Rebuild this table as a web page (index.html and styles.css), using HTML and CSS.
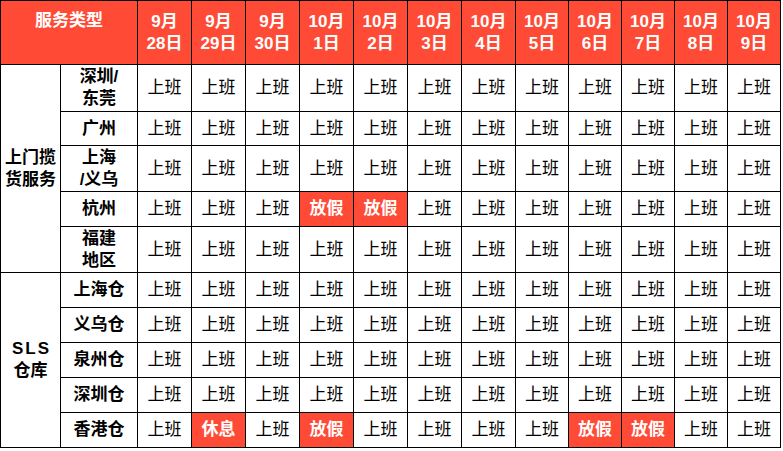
FILE: index.html
```html
<!DOCTYPE html>
<html lang="zh-CN">
<head>
<meta charset="utf-8">
<link rel="stylesheet" href="styles.css">
</head>
<body>
<table class="sched">
<colgroup>
<col class="c-grp"><col class="c-city">
<col class="c-d54"><col class="c-d54"><col class="c-d54"><col class="c-d54"><col class="c-d54"><col class="c-d54"><col class="c-d54">
<col class="c-d53"><col class="c-d53"><col class="c-d53"><col class="c-d53"><col class="c-d53">
</colgroup>
<thead>
<tr class="r-head">
<th colspan="2" class="th-type">服务类型</th>
<th>9月<br>28日</th><th>9月<br>29日</th><th>9月<br>30日</th>
<th>10月<br>1日</th><th>10月<br>2日</th><th>10月<br>3日</th><th>10月<br>4日</th><th>10月<br>5日</th><th>10月<br>6日</th><th>10月<br>7日</th><th>10月<br>8日</th><th>10月<br>9日</th>
</tr>
</thead>
<tbody>
<tr class="r-47">
<td rowspan="5" class="grp">上门揽货服务</td>
<td class="city">深圳/<br>东莞</td>
<td>上班</td><td>上班</td><td>上班</td><td>上班</td><td>上班</td><td>上班</td><td>上班</td><td>上班</td><td>上班</td><td>上班</td><td>上班</td><td>上班</td>
</tr>
<tr class="r-34">
<td class="city">广州</td>
<td>上班</td><td>上班</td><td>上班</td><td>上班</td><td>上班</td><td>上班</td><td>上班</td><td>上班</td><td>上班</td><td>上班</td><td>上班</td><td>上班</td>
</tr>
<tr class="r-46">
<td class="city">上海<br>/义乌</td>
<td>上班</td><td>上班</td><td>上班</td><td>上班</td><td>上班</td><td>上班</td><td>上班</td><td>上班</td><td>上班</td><td>上班</td><td>上班</td><td>上班</td>
</tr>
<tr class="r-35">
<td class="city">杭州</td>
<td>上班</td><td>上班</td><td>上班</td><td class="off">放假</td><td class="off">放假</td><td>上班</td><td>上班</td><td>上班</td><td>上班</td><td>上班</td><td>上班</td><td>上班</td>
</tr>
<tr class="r-46">
<td class="city">福建<br>地区</td>
<td>上班</td><td>上班</td><td>上班</td><td>上班</td><td>上班</td><td>上班</td><td>上班</td><td>上班</td><td>上班</td><td>上班</td><td>上班</td><td>上班</td>
</tr>
<tr class="r-35">
<td rowspan="5" class="grp"><span class="latin">SLS</span><br>仓库</td>
<td class="city">上海仓</td>
<td>上班</td><td>上班</td><td>上班</td><td>上班</td><td>上班</td><td>上班</td><td>上班</td><td>上班</td><td>上班</td><td>上班</td><td>上班</td><td>上班</td>
</tr>
<tr class="r-35">
<td class="city">义乌仓</td>
<td>上班</td><td>上班</td><td>上班</td><td>上班</td><td>上班</td><td>上班</td><td>上班</td><td>上班</td><td>上班</td><td>上班</td><td>上班</td><td>上班</td>
</tr>
<tr class="r-35">
<td class="city">泉州仓</td>
<td>上班</td><td>上班</td><td>上班</td><td>上班</td><td>上班</td><td>上班</td><td>上班</td><td>上班</td><td>上班</td><td>上班</td><td>上班</td><td>上班</td>
</tr>
<tr class="r-35">
<td class="city">深圳仓</td>
<td>上班</td><td>上班</td><td>上班</td><td>上班</td><td>上班</td><td>上班</td><td>上班</td><td>上班</td><td>上班</td><td>上班</td><td>上班</td><td>上班</td>
</tr>
<tr class="r-35">
<td class="city">香港仓</td>
<td>上班</td><td class="off">休息</td><td>上班</td><td class="off">放假</td><td>上班</td><td>上班</td><td>上班</td><td>上班</td><td class="off">放假</td><td class="off">放假</td><td>上班</td><td>上班</td>
</tr>
</tbody>
</table>
</body>
</html>
```
FILE: styles.css
```css
html, body {
  margin: 0;
  padding: 0;
  background: #ffffff;
}

.sched {
  border-collapse: collapse;
  table-layout: fixed;
  width: 781px;
  font-family: "Liberation Sans", "Noto Sans CJK SC", sans-serif;
  font-size: 17px;
  line-height: 22px;
  color: #000000;
}

.c-grp { width: 60px; }
.c-city { width: 77px; }
.c-d54 { width: 54px; }
.c-d53 { width: 53px; }

.sched th,
.sched td {
  border: 1px solid #000000;
  padding: 0;
  text-align: center;
  vertical-align: middle;
  overflow: hidden;
  white-space: nowrap;
}

.sched th {
  background: #ff4b36;
  color: #ffffff;
  font-weight: bold;
}

.sched .th-type {
  vertical-align: top;
  padding-top: 9px;
}

.r-head { height: 64px; }
.r-47 { height: 47px; }
.r-34 { height: 34px; }
.r-46 { height: 46px; }
.r-35 { height: 35px; }

.sched td.city,
.sched td.grp {
  font-weight: bold;
}

.sched td.grp {
  white-space: normal;
  padding: 0 3px;
  word-break: break-all;
}

.latin {
  letter-spacing: 2px;
  margin-right: -2px;
}

.sched td.off {
  background: #ff4b36;
  color: #ffffff;
  font-weight: bold;
}
```
